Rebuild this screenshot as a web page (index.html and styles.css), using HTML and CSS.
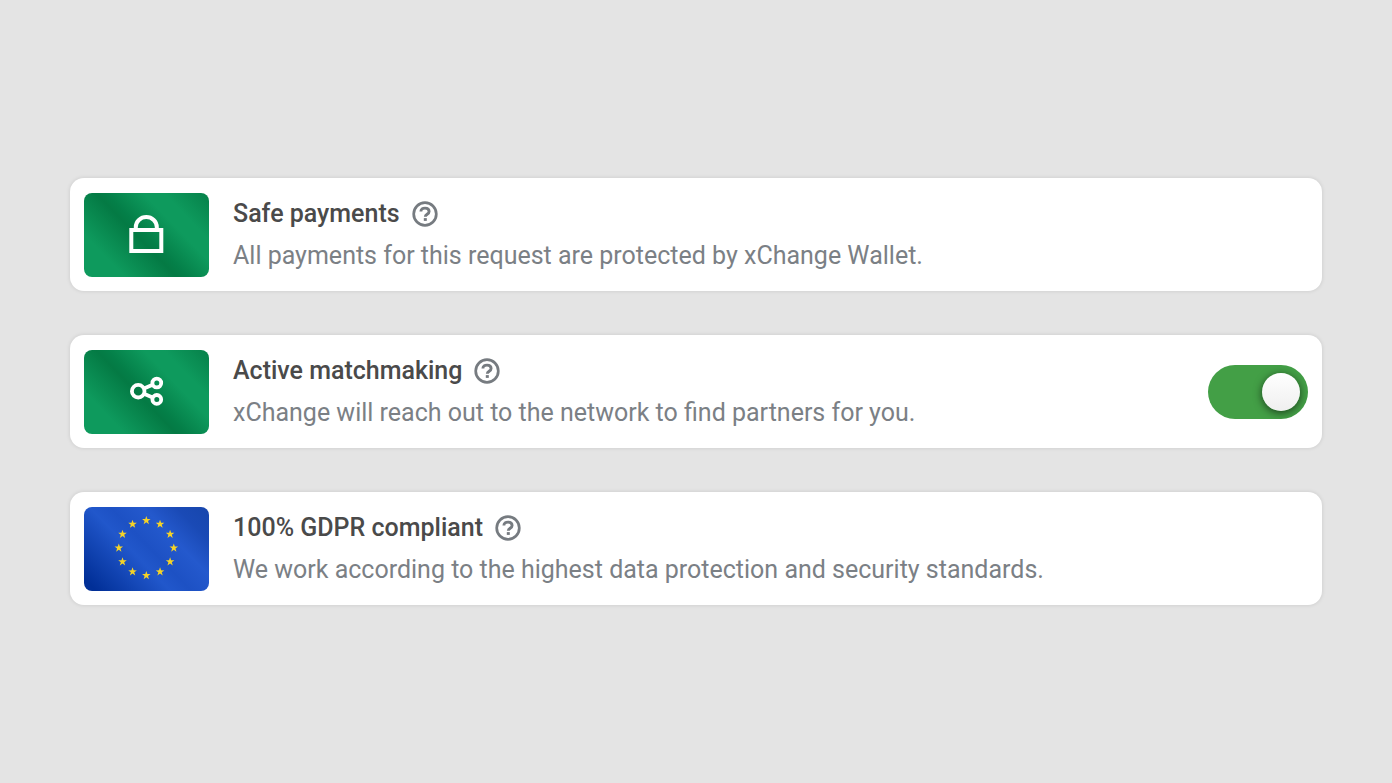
FILE: index.html
```html
<!DOCTYPE html>
<html lang="en">
<head>
  <meta charset="UTF-8">
  <meta name="viewport" content="width=device-width, initial-scale=1.0">
  <title>Request benefits</title>
  <link rel="stylesheet" href="styles.css">
</head>
<body>
  <!-- Shared icons -->
  <svg class="sprite" aria-hidden="true">
    <symbol id="help" viewBox="0 0 26 26">
      <circle cx="13" cy="13" r="11.3" fill="none" stroke="currentColor" stroke-width="2.7"/>
      <path d="M8.9 10.6C8.9 8.2 10.7 7.1 13 7.1s4.1 1.1 4.1 3.3c0 2.7-3.8 2.9-3.8 5.4" fill="none" stroke="currentColor" stroke-width="2.9"/>
      <rect x="11.8" y="17.1" width="3" height="2.8" fill="currentColor"/>
    </symbol>
    <symbol id="star" viewBox="-5 -5 10 10">
      <path d="M0-4.5 1.06-1.46 4.28-1.39 1.71.56 2.65 3.64 0 1.8-2.65 3.64-1.71.56-4.28-1.39-1.06-1.46z" fill="#f5d327"/>
    </symbol>
  </svg>

  <main class="cards">
    <section class="card">
      <div class="thumb thumb-green">
        <svg viewBox="0 0 125 84" aria-hidden="true">
          <g fill="none" stroke="#fff" stroke-width="4">
            <rect x="47.3" y="37" width="30" height="21"/>
            <path d="M51.8 36v-2a10.5 10 0 0 1 21 0v2"/>
          </g>
        </svg>
      </div>
      <div class="info">
        <div class="heading">
          <h2>Safe payments</h2>
          <button class="help" type="button" aria-label="About safe payments"><svg><use href="#help"/></svg></button>
        </div>
        <p>All payments for this request are protected by xChange Wallet.</p>
      </div>
    </section>

    <section class="card">
      <div class="thumb thumb-green">
        <svg viewBox="0 0 125 84" aria-hidden="true">
          <g fill="none" stroke="#fff" stroke-width="3.8">
            <circle cx="54.2" cy="41.2" r="6.3"/>
            <circle cx="72.8" cy="33" r="4.4"/>
            <circle cx="72.8" cy="49.4" r="4.4"/>
            <path d="M60 38.6l8.6-3.8M60 43.8l8.6 3.8"/>
          </g>
        </svg>
      </div>
      <div class="info">
        <div class="heading">
          <h2 id="matchmaking">Active matchmaking</h2>
          <button class="help" type="button" aria-label="About active matchmaking"><svg><use href="#help"/></svg></button>
        </div>
        <p>xChange will reach out to the network to find partners for you.</p>
      </div>
      <input class="toggle" type="checkbox" role="switch" aria-labelledby="matchmaking" checked>
    </section>

    <section class="card">
      <div class="thumb thumb-eu">
        <svg viewBox="0 0 125 84" aria-hidden="true">
          <g transform="translate(57.3 36)">
            <use href="#star" width="10" height="10" x="0" y="-27.5"/>
            <use href="#star" width="10" height="10" x="13.75" y="-23.8"/>
            <use href="#star" width="10" height="10" x="23.8" y="-13.75"/>
            <use href="#star" width="10" height="10" x="27.5" y="0"/>
            <use href="#star" width="10" height="10" x="23.8" y="13.75"/>
            <use href="#star" width="10" height="10" x="13.75" y="23.8"/>
            <use href="#star" width="10" height="10" x="0" y="27.5"/>
            <use href="#star" width="10" height="10" x="-13.75" y="23.8"/>
            <use href="#star" width="10" height="10" x="-23.8" y="13.75"/>
            <use href="#star" width="10" height="10" x="-27.5" y="0"/>
            <use href="#star" width="10" height="10" x="-23.8" y="-13.75"/>
            <use href="#star" width="10" height="10" x="-13.75" y="-23.8"/>
          </g>
        </svg>
      </div>
      <div class="info">
        <div class="heading">
          <h2>100% GDPR compliant</h2>
          <button class="help" type="button" aria-label="About GDPR compliance"><svg><use href="#help"/></svg></button>
        </div>
        <p>We work according to the highest data protection and security standards.</p>
      </div>
    </section>
  </main>
</body>
</html>
```
FILE: styles.css
```css
* {
  box-sizing: border-box;
}
body {
  display: flex;
  align-items: center;
  min-height: 100vh;
  margin: 0;
  padding: 20px 70px;
  background-color: #e4e4e4;
  font-family: Roboto, "Liberation Sans", sans-serif;
}
.sprite {
  position: absolute;
  width: 0;
  height: 0;
}
.cards {
  display: flex;
  flex: 1;
  flex-direction: column;
  gap: 44px;
}
.card {
  display: flex;
  align-items: center;
  gap: 24px;
  padding: 15px 14px 14px;
  background-color: #fff;
  border-radius: 14px;
  box-shadow: 0 0 4px rgba(0, 0, 0, 0.12);
}

/* Thumbnails */
.thumb {
  flex: none;
  width: 125px;
  height: 84px;
  border-radius: 8px;
  overflow: hidden;
}
.thumb svg {
  display: block;
  width: 100%;
  height: 100%;
}
.thumb-green {
  background: linear-gradient(46deg, #0e9a5d 20%, #047a44 45%, #047f48 50%, #0e9a5d 68%, #0e9a5d 78%, #068049 100%);
}
.thumb-eu {
  background: linear-gradient(46deg, #012f97 6%, #2157cb 42%, #1d51c4 52%, #2459cd 68%, #1a4ab6 84%, #1746ac 100%);
}

/* Text */
.info {
  flex: 1;
}
.heading {
  display: flex;
  align-items: center;
  gap: 12px;
}
h2 {
  margin: 0;
  font-size: 25px;
  font-weight: 500;
  line-height: 42px;
  color: #4a4a4a;
}
p {
  margin: 0;
  font-size: 25px;
  line-height: 42px;
  color: #7b8085;
}
.help {
  width: 26px;
  height: 26px;
  padding: 0;
  border: 0;
  background: none;
  color: #767b80;
  cursor: pointer;
}
.help svg {
  display: block;
  width: 26px;
  height: 26px;
}

/* Switch */
.toggle {
  appearance: none;
  display: flex;
  align-items: center;
  flex: none;
  width: 100px;
  height: 54px;
  margin: 0;
  padding: 8px;
  border-radius: 27px;
  background-color: #b5b5b5;
  overflow: hidden;
  cursor: pointer;
}
.toggle::before {
  content: "";
  width: 38px;
  height: 38px;
  border-radius: 50%;
  background: linear-gradient(#fff, #efefef);
  box-shadow: 0 2px 8px rgba(0, 0, 0, 0.6);
}
.toggle:checked {
  justify-content: flex-end;
  background-color: #439f46;
}
```
